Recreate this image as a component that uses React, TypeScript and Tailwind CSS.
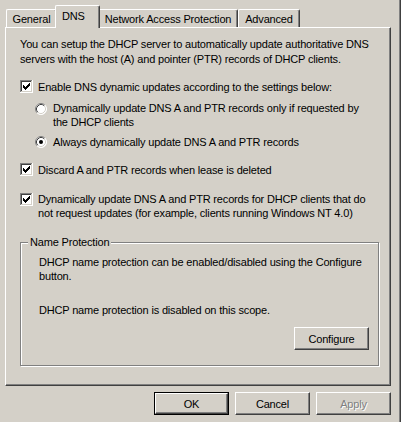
import React from "react";

function CheckBox({ checked }: { checked: boolean }) {
  const px: [number, number][] = [
    [6, 0],
    [5, 1], [6, 1],
    [0, 2], [4, 2], [5, 2], [6, 2],
    [0, 3], [1, 3], [3, 3], [4, 3], [5, 3],
    [0, 4], [1, 4], [2, 4], [3, 4], [4, 4],
    [1, 5], [2, 5], [3, 5],
    [2, 6],
  ];
  return (
    <svg width="13" height="13" viewBox="0 0 13 13" className="shrink-0 block" shapeRendering="crispEdges">
      <rect x="0" y="0" width="13" height="13" fill="#ffffff" />
      <rect x="0" y="0" width="12" height="1" fill="#808080" />
      <rect x="0" y="0" width="1" height="12" fill="#808080" />
      <rect x="1" y="1" width="10" height="1" fill="#404040" />
      <rect x="1" y="1" width="1" height="10" fill="#404040" />
      <rect x="1" y="11" width="11" height="1" fill="#d4d0c8" />
      <rect x="11" y="1" width="1" height="11" fill="#d4d0c8" />
      {checked &&
        px.map(([x, y], i) => (
          <rect key={i} x={3 + x} y={3 + y} width="1" height="1" fill="#000000" />
        ))}
    </svg>
  );
}

function Radio({ checked }: { checked: boolean }) {
  return (
    <svg width="12" height="12" viewBox="0 0 12 12" className="shrink-0 block">
      <circle cx="6" cy="6" r="5.5" fill="#ffffff" />
      <path d="M2.11 9.89 A5.5 5.5 0 0 1 9.89 2.11" fill="none" stroke="#808080" strokeWidth="1" />
      <path d="M9.89 2.11 A5.5 5.5 0 0 1 2.11 9.89" fill="none" stroke="#ffffff" strokeWidth="1" />
      <path d="M2.82 9.18 A4.5 4.5 0 0 1 9.18 2.82" fill="none" stroke="#404040" strokeWidth="1" />
      <path d="M9.18 2.82 A4.5 4.5 0 0 1 2.82 9.18" fill="none" stroke="#d4d0c8" strokeWidth="1" />
      {checked && <circle cx="6" cy="6" r="2" fill="#000000" />}
    </svg>
  );
}

function Button({
  children,
  isDefault,
  disabled,
}: {
  children: React.ReactNode;
  isDefault?: boolean;
  disabled?: boolean;
}) {
  if (isDefault) {
    return (
      <div className="w-[75px] h-[23px] border border-black flex">
        <div className="flex-1 flex items-center justify-center border-t border-l border-white border-r border-b border-r-[#404040] border-b-[#404040] shadow-[inset_-1px_-1px_0_#808080]">
          {children}
        </div>
      </div>
    );
  }
  return (
    <div
      className={
        "w-[75px] h-[23px] flex items-center justify-center border-t border-l border-white border-r border-b border-r-[#404040] border-b-[#404040] shadow-[inset_-1px_-1px_0_#808080] " +
        (disabled ? "text-[#808080] [text-shadow:1px_1px_0_#ffffff]" : "")
      }
    >
      {children}
    </div>
  );
}

function Tab({ children, width }: { children: React.ReactNode; width: string }) {
  return (
    <div
      className={
        width +
        " h-[18px] flex items-center justify-center border-t border-l border-white border-r border-r-[#404040] rounded-tl-[2px] rounded-tr-[2px] shadow-[inset_-1px_0_0_#808080] whitespace-nowrap"
      }
    >
      {children}
    </div>
  );
}

export default function App() {
  return (
    <div className="w-[401px] h-[422px] bg-[#d4d0c8] flex font-['Liberation_Sans',Arial,sans-serif] text-[11px] tracking-[-0.17px] leading-[14px] text-black overflow-hidden">
      <div className="w-[399px] pl-[5px] pt-[5px]">
        {/* Tabs */}
        <div className="flex items-end h-[22px] pl-[1px]">
          <Tab width="w-[51px]">General</Tab>
          <div className="relative z-10 w-[45px] h-[23px] -mb-[1px] -mx-[2px] bg-[#d4d0c8] border-t border-l border-white border-r border-r-[#404040] rounded-tl-[2px] rounded-tr-[2px] shadow-[inset_-1px_0_0_#808080] flex items-center pl-[6px] pb-[2px]">
            DNS
          </div>
          <Tab width="w-[140px]">Network Access Protection</Tab>
          <Tab width="w-[62px]">Advanced</Tab>
        </div>

        {/* Panel */}
        <div className="w-[386px] h-[359px] border-t border-l border-white border-r border-b border-r-[#404040] border-b-[#404040] shadow-[inset_-1px_-1px_0_#808080] pl-[14px] pt-[9px]">
          <p className="leading-[15px] whitespace-nowrap">
            You can setup the DHCP server to automatically update authoritative DNS
            <br />
            servers with the host (A) and pointer (PTR) records of DHCP clients.
          </p>

          <div className="mt-[13px] h-[13px] flex items-center gap-[5px] whitespace-nowrap">
            <CheckBox checked />
            <span>Enable DNS dynamic updates according to the settings below:</span>
          </div>

          <div className="mt-[8px] ml-[15px] flex items-start gap-[6px] whitespace-nowrap">
            <div className="mt-[2px]">
              <Radio checked={false} />
            </div>
            <span>
              Dynamically update DNS A and PTR records only if requested by
              <br />
              the DHCP clients
            </span>
          </div>

          <div className="mt-[6px] ml-[15px] flex items-start gap-[6px] whitespace-nowrap">
            <div className="mt-[1px]">
              <Radio checked />
            </div>
            <span>Always dynamically update DNS A and PTR records</span>
          </div>

          <div className="mt-[14px] h-[13px] flex items-center gap-[5px] whitespace-nowrap">
            <CheckBox checked />
            <span>Discard A and PTR records when lease is deleted</span>
          </div>

          <div className="mt-[16px] flex items-start gap-[5px] whitespace-nowrap">
            <div className="mt-[1px]">
              <CheckBox checked />
            </div>
            <span>
              Dynamically update DNS A and PTR records for DHCP clients that do
              <br />
              not request updates (for example, clients running Windows NT 4.0)
            </span>
          </div>

          {/* Group box */}
          <div className="relative mt-[22px] w-[359px] border border-[#808080] shadow-[inset_1px_1px_0_#ffffff,1px_1px_0_#ffffff] pl-[18px] pt-[12px] pr-[9px] pb-[15px]">
            <span className="absolute left-[7px] -top-[8px] px-[2px] bg-[#d4d0c8] leading-[14px] whitespace-nowrap">
              Name Protection
            </span>
            <p className="whitespace-nowrap">
              DHCP name protection can be enabled/disabled using the Configure
              <br />
              button.
            </p>
            <p className="mt-[20px] whitespace-nowrap">DHCP name protection is disabled on this scope.</p>
            <div className="mt-[10px] flex justify-end">
              <Button>Configure</Button>
            </div>
          </div>
        </div>

        {/* Dialog buttons */}
        <div className="w-[386px] mt-[6px] flex justify-end gap-[6px]">
          <Button isDefault>OK</Button>
          <Button>Cancel</Button>
          <Button disabled>Apply</Button>
        </div>
      </div>
      <div className="w-[1px] h-full bg-[#808080]" />
      <div className="w-[1px] h-full bg-[#404040]" />
    </div>
  );
}
